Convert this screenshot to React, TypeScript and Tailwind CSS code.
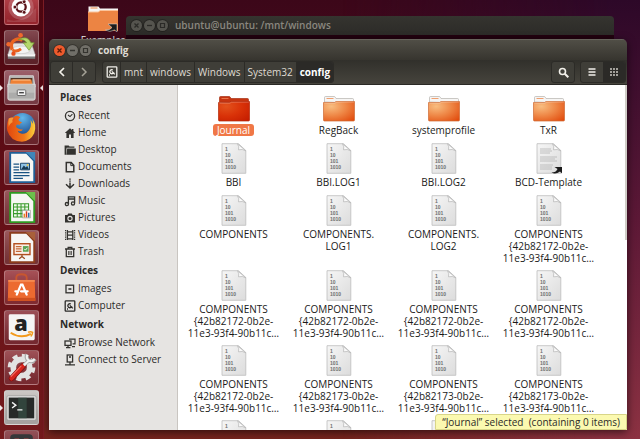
import * as React from "react";

type IconProps = { className?: string };

/* ---------- Sidebar icons ---------- */

function Glyph({ children }: { children: React.ReactNode }) {
  return (
    <svg
      viewBox="0 0 12 12"
      className="size-3 shrink-0"
      fill="none"
      stroke="#33322f"
      strokeWidth="1.3"
      aria-hidden
    >
      {children}
    </svg>
  );
}

const ClockIcon = () => (
  <Glyph>
    <circle cx="6" cy="6" r="4.6" />
    <path d="M4 5l2 1.6L8.4 4.2" strokeWidth="1.1" />
  </Glyph>
);

const HomeIcon = () => (
  <Glyph>
    <path
      d="M6 1.2L.8 6h1.6v5h2.6V7.6h2V11h2.6V6h1.6L9.4 4.1V2H8v.9z"
      fill="#33322f"
      stroke="none"
    />
  </Glyph>
);

const FolderIcon = () => (
  <Glyph>
    <path d="M.6 10.8V1.4h4l1 1.2h4.800v1.200H2.600l-.600 7z" fill="#33322f" stroke="none" />
    <path d="M3.200 4.600h8.600v6.200H2.200z" fill="#33322f" stroke="none" />
  </Glyph>
);

const DocumentIcon = () => (
  <Glyph>
    <path d="M2.3 1.6h4.9l2.6 2.6v6.6H2.3z" strokeWidth="1.5" />
    <path d="M6.8 1.6v3h3" strokeWidth="1" />
  </Glyph>
);

const DownloadIcon = () => (
  <Glyph>
    <path d="M6 4.6v5M2 6.2l4 3.8 4-3.8" strokeWidth="1.5" />
    <path d="M6 .6v1.2M6 2.6v1.2" strokeWidth="1.5" />
  </Glyph>
);

const MusicIcon = () => (
  <Glyph>
    <path d="M4.4 9V1.9h6.2V8M4.4 4h6.2" />
    <circle cx="2.9" cy="9.1" r="1.6" />
    <circle cx="9" cy="8.4" r="1.6" />
  </Glyph>
);

const CameraIcon = () => (
  <Glyph>
    <path
      d="M1 3h2.4l.8-1.4h3.6L8.6 3H11v7.6H1z"
      fill="#33322f"
      stroke="none"
    />
    <circle cx="6" cy="6.5" r="2.1" stroke="#e6e4e2" strokeWidth="1.1" />
  </Glyph>
);

const FilmIcon = () => (
  <Glyph>
    <path d="M3.4 1v10M8.8 1v10M3.4 2.8h5.4M3.4 6.2h5.4M3.4 9.8h5.4" />
    <path d="M1.6 1v10M10.6 1v10" strokeDasharray="1.2 1" strokeWidth="1.2" />
  </Glyph>
);

const TrashIcon = () => (
  <Glyph>
    <path d="M1 3h10M4.2 2.8V1.4h3.6v1.4M2.3 3v7.6h7.4V3" />
    <path d="M4.6 5v4M6 5v4M7.4 5v4" strokeWidth=".8" />
  </Glyph>
);

const ImageDriveIcon = () => (
  <Glyph>
    <rect x="2" y="2.2" width="7.6" height="7.6" />
    <path d="M4.4 5.2h3v1.6h-3z" fill="#33322f" stroke="none" />
  </Glyph>
);

const DiskIcon = ({ className = "size-3 shrink-0" }: IconProps) => (
  <svg
    viewBox="0 0 12 12"
    className={className}
    fill="none"
    stroke="currentColor"
    strokeWidth="1.3"
    aria-hidden
  >
    <rect x="1.2" y=".8" width="9.6" height="10.4" rx=".8" />
    <path d="M7.8 6.2a2 2 0 1 1-1-2.2M5.8 5.4l3 3" />
    <path d="M3 9h1" />
  </svg>
);

const NetworkIcon = () => (
  <Glyph>
    <path d="M5 2.2h6v4.6H8.6M11 9.6H8" strokeWidth="1.2" />
    <rect x="1" y="4" width="6" height="4.4" />
    <path d="M2 10.6h4.4M4 8.4v2" />
  </Glyph>
);

const ServerIcon = () => (
  <Glyph>
    <rect x="3.2" y="1" width="5.4" height="7" />
    <path d="M5 3h2M6 8v2.6M1 10.8h10" />
  </Glyph>
);

/* ---------- File icons ---------- */

function BigFolder({ selected }: { selected?: boolean }) {
  const id = selected ? "folder-on" : "folder-off";
  return (
    <svg viewBox="0 0 34 27" className="h-[27px] w-[34px]" aria-hidden>
      <defs>
        <radialGradient id={id} cx=".25" cy=".25" r="1">
          <stop offset="0" stopColor={selected ? "#e2521c" : "#f8bd80"} />
          <stop offset=".5" stopColor={selected ? "#d93208" : "#ee8544"} />
          <stop offset="1" stopColor={selected ? "#c41c00" : "#e14a0c"} />
        </radialGradient>
      </defs>
      <path
        d="M2.5 7V2.5q0-1 1-1H12q1 0 1.500 1L14 3.500h16.500q1 0 1 1V8z"
        fill={selected ? "#c63410" : "#f6f5f4"}
        stroke={selected ? "#a83014" : "#b5b1ad"}
        strokeWidth=".7"
      />
      <path
        d="M4.500 3.500h7"
        stroke={selected ? "#e8744a" : "#f0a070"}
        strokeWidth="1.2"
      />
      <path
        d="M1.500 7.500h11l1.500-1h18.500V25q0 1-1 1h-29q-1 0-1-1z"
        fill={`url(#${id})`}
        stroke={selected ? "#b22808" : "#cf6a34"}
        strokeWidth=".7"
      />
      <path d="M2.500 8.200h10.500l1.400-1h17.400" fill="none" stroke="#fff" strokeOpacity=".35" strokeWidth=".7" />
    </svg>
  );
}

function Page({ children }: { children: React.ReactNode }) {
  return (
    <svg viewBox="0 0 26 31" className="h-[31px] w-[26px]" aria-hidden>
      <defs>
        <linearGradient id="page" x1="0" y1="0" x2="1" y2="1">
          <stop offset="0" stopColor="#f6f6f6" />
          <stop offset="1" stopColor="#dcdcdc" />
        </linearGradient>
      </defs>
      <path
        d="M1 .7h16.500l7.300 6.800v22.800H1z"
        fill="url(#page)"
        stroke="#bdbdbd"
        strokeWidth=".8"
      />
      <path d="M16.500.8q2 3 1 6 4-1 7.200.9z" fill="#fafafa" stroke="#b4b4b4" strokeWidth=".7" />
      {children}
    </svg>
  );
}

function BinaryFile() {
  return (
    <Page>
      <g fill="#6e6e6e" fontFamily="Liberation Sans, sans-serif" fontSize="5" fontWeight="700">
        <text x="4" y="8">1</text>
        <text x="4" y="14">10</text>
        <text x="4" y="20">101</text>
        <text x="4" y="26">1010</text>
      </g>
    </Page>
  );
}

function LinkedText() {
  return (
    <Page>
      <path
        d="M4 6h11M4 8h12M4 10h10M4 14h17M4 16h15M4 18h17M4 22h13M4 24h12M4 26h12"
        stroke="#b4b4b4"
        strokeWidth=".8"
      />
      <path d="M18.500 24H26v6.500l-2-2q-4.500 3.500-8.500 1 4.500 0 6-3.500z" fill="#1c1c1c" />
    </Page>
  );
}

/* ---------- Launcher icons ---------- */

const DashIcon = () => (
  <svg viewBox="0 0 35 35" className="size-full" aria-hidden>
    <circle cx="17" cy="17" r="13.500" fill="#fff" opacity=".18" />
    <path d="M2 30q14 6 31-12v15H2z" fill="#fff" opacity=".12" />
    <circle cx="17" cy="17" r="10" fill="#fff" />
    <circle cx="17" cy="17" r="5" fill="none" stroke="#5a1218" strokeWidth="2.4" />
    <g fill="#5a1218" stroke="#fff" strokeWidth=".8">
      <circle cx="10.500" cy="17" r="2" />
      <circle cx="20.300" cy="11.400" r="2" />
      <circle cx="20.300" cy="22.600" r="2" />
    </g>
  </svg>
);

const InstallIcon = () => (
  <svg viewBox="0 0 35 35" className="size-full" aria-hidden>
    <path d="M7 13h21l4 12H3z" fill="#e2e2e2" stroke="#9d9d9d" strokeWidth=".6" />
    <path d="M3 25h29v4.500H3z" fill="#7c7c7c" />
    <path d="M3 24.500h29V27H3z" fill="#f6f6f6" />
    <ellipse cx="17" cy="20" rx="10" ry="4" fill="#f3f3f3" stroke="#bbb" strokeWidth=".5" />
    <path d="M7.500 20q-3-8 4-11 4-1.500 7 1" fill="none" stroke="#ea6420" strokeWidth="3.600" />
    <path d="M8 20q4 3 9-1" fill="none" stroke="#ea6420" strokeWidth="3" />
    <circle cx="16.500" cy="4.500" r="2.500" fill="#f0682c" />
    <circle cx="3.800" cy="14" r="2.400" fill="#f0682c" />
    <circle cx="9" cy="24" r="2.300" fill="#e8501c" />
    <path d="M14 9q10-5 13.500 3.500H31l-5.500 8-6-8h3.500Q21 8.500 14 9z" fill="#b4d66c" stroke="#6b9a2c" strokeWidth=".7" />
  </svg>
);

const FilesIcon = () => (
  <svg viewBox="0 0 35 35" className="size-full" aria-hidden>
    <path d="M5 5h25l2 12H3z" fill="#b4b4b2" stroke="#e2e2e2" strokeWidth=".8" />
    <path d="M6 7.500h23v8H6z" fill="#4a2b1c" />
    <path d="M6.500 9h21.500l1 5H5.500z" fill="#ef8134" />
    <path d="M8 9.500h19" stroke="#ffd0a0" strokeWidth="1" />
    <path d="M3 14h29v15q0 2-2 2H5q-2 0-2-2z" fill="#bfbfbd" stroke="#e8e8e8" strokeWidth=".8" />
    <path d="M4 23h27v6H4z" fill="#a0a09e" opacity=".6" />
    <rect x="13" y="20" width="9" height="6" rx=".8" fill="#f2f2f2" stroke="#666" strokeWidth="1" />
    <path d="M15 23h5" stroke="#444" strokeWidth="1.500" />
  </svg>
);

const FirefoxIcon = () => (
  <svg viewBox="0 0 35 35" className="size-full" aria-hidden>
    <defs>
      <radialGradient id="globe" cx=".5" cy=".2" r=".8">
        <stop offset="0" stopColor="#63b9ec" />
        <stop offset="1" stopColor="#123a80" />
      </radialGradient>
      <linearGradient id="fox" x1="0" y1="0" x2="1" y2="0">
        <stop offset="0" stopColor="#e2460e" />
        <stop offset=".6" stopColor="#f0781a" />
        <stop offset="1" stopColor="#fbd13c" />
      </linearGradient>
    </defs>
    <circle cx="18.500" cy="15.500" r="13.500" fill="url(#globe)" />
    <path
      d="M4 8q-3 6-1.500 13Q6 32.500 18 32.500q9-.5 13-9 3-9-2-15 1 3 .3 5-1-3-2.300-4 1.500 6-1 10-3 5-8 4.500-4-.5-4.500-3 3 1.500 5.500-1.500-3 .3-5.500-1.300-3-1.700-1-3.700 2-.5 3.200.3 0-2 2.500-3-3-.3-4-2.300.5-2 2-3Q11 3.500 9 7 6.500 6.500 4 8z"
      fill="url(#fox)"
    />
    <path d="M4 8q3-1.500 5-.8Q7 10 8 12q-3 1-4 5-1-4 0-9z" fill="#f39a3c" />
  </svg>
);

function OfficeDoc({ color, dark, children }: { color: string; dark: string; children: React.ReactNode }) {
  return (
    <svg viewBox="0 0 35 35" className="size-full" aria-hidden>
      <path d="M5.500 2h17.500l8 8.500v22.500H5.500z" fill="#f7f7f5" stroke={color} strokeWidth="2" />
      <path d="M22 1h10v10z" fill={dark} />
      {children}
    </svg>
  );
}

const WriterIcon = () => (
  <OfficeDoc color="#1f5f96" dark="#3f86b8">
    <path d="M9 14h6M9 17h6M9 20h6M9 23h17M9 26h17M9 29h10" stroke="#1b5482" strokeWidth="1.300" />
    <path d="M16.500 13h9.500v7h-9.500z" fill="#8fc3e6" stroke="#1b4263" strokeWidth="1" />
    <path d="M17 19.500l3-4 2 2 1.500-1.500 2 3.500z" fill="#183a52" />
    <circle cx="24" cy="14.800" r="1" fill="#f5c840" />
  </OfficeDoc>
);

const CalcIcon = () => (
  <OfficeDoc color="#2f9a22" dark="#6cbf4c">
    <path d="M9 13.500h16v14H9z" fill="#eef8ea" />
    <path d="M9 13.500h16v14H9zM9 17h16M9 20.500h16M9 24h16M13 13.500v14M17 13.500v14M21 13.500v14" fill="none" stroke="#3a9a2c" strokeWidth="1.100" />
    <path d="M18.500 20.500h8.500v8h-8.500z" fill="#fff" stroke="#888" strokeWidth=".6" />
    <path d="M20.500 28v-4" stroke="#e08a1c" strokeWidth="1.600" />
    <path d="M22.800 28v-6.500" stroke="#d83a20" strokeWidth="1.600" />
    <path d="M25.200 28v-5" stroke="#2f6fb0" strokeWidth="1.600" />
  </OfficeDoc>
);

const ImpressIcon = () => (
  <OfficeDoc color="#8c3d1c" dark="#a8603a">
    <rect x="9.500" y="13.500" width="17" height="11.500" fill="#fbeee6" stroke="#b3501f" strokeWidth="1.500" />
    <path d="M11.500 16.500h6M11.500 19h6M11.500 21.500h6" stroke="#c46a38" strokeWidth="1.300" />
    <rect x="19" y="16" width="6" height="6" fill="#5aa352" />
    <path d="M20.500 19l1.200 1.300 2-2.500" stroke="#fff" fill="none" />
    <path d="M18 25v2M18 27l-3 2.500M18 27l3 2.500" stroke="#9b4a1e" strokeWidth="1.300" />
  </OfficeDoc>
);

const SoftwareIcon = () => (
  <svg viewBox="0 0 35 35" className="size-full" aria-hidden>
    <path d="M12 11V7q0-3.500 5.500-3.500T23 7v4" fill="none" stroke="#c8562f" strokeWidth="2" />
    <path d="M3.500 9.500h28l.7 22H3z" fill="#ec6a30" />
    <path d="M3.500 9.500h28v2h-28z" fill="#f58a52" />
    <path d="M3 28.500h29.200v3H3z" fill="#d0501e" />
    <g stroke="#fff" strokeWidth="2.400" fill="none" strokeLinecap="round">
      <path d="M12.500 25L17 14.500h1.500L23 25M11 21.500h2.500M17 21.500h7" />
    </g>
  </svg>
);

const AmazonIcon = () => (
  <svg viewBox="0 0 35 35" className="size-full" aria-hidden>
    <rect x="4" y="3.500" width="27.500" height="27.500" rx="1.500" fill="#f5f5f4" />
    <text x="17" y="21" textAnchor="middle" fontFamily="Open Sans, sans-serif" fontSize="23" fontWeight="800" fill="#222">
      a
    </text>
    <path d="M6 23q11 7 21.500 1.200" fill="none" stroke="#f39a1c" strokeWidth="2" />
    <path d="M24.500 22.500q3-1 4.800.2-.2 2.800-2 4.300" fill="none" stroke="#f39a1c" strokeWidth="1.500" />
  </svg>
);

const SettingsIcon = () => (
  <svg viewBox="0 0 35 35" className="size-full" aria-hidden>
    <circle cx="17.500" cy="17.500" r="12.700" fill="none" stroke="#e2e2e2" strokeWidth="4" strokeDasharray="5.400 4.570" />
    <circle cx="17.500" cy="17.500" r="8.700" fill="none" stroke="#e2e2e2" strokeWidth="6" />
    <path d="M7 29L20 15" stroke="#7c0f10" strokeWidth="6" strokeLinecap="round" />
    <path d="M7 29L19 16" stroke="#d6251e" strokeWidth="4.600" strokeLinecap="round" />
    <path d="M6.500 27L17 16" stroke="#f07066" strokeWidth="1.200" strokeLinecap="round" />
    <path d="M20 15l5-4.500M23.500 3.500q-2 4 1.500 6.500 4 2.500 7-1.500" fill="none" stroke="#a9a9a9" strokeWidth="4" />
    <path d="M20 15l5-4.500M23.700 4q-1.700 4 1.500 6 3.500 2 6.300-1.500" fill="none" stroke="#f0f0f0" strokeWidth="2.200" />
  </svg>
);

const TerminalIcon = () => (
  <svg viewBox="0 0 35 35" className="size-full" aria-hidden>
    <rect x="2" y="5" width="31" height="26" rx="1.500" fill="#dededc" stroke="#8e8e8c" strokeWidth=".6" />
    <rect x="4" y="7" width="27" height="22" fill="#272a28" />
    <path d="M14 7h9v22h-9z" fill="#3c5a4c" opacity=".55" />
    <path d="M7.500 12l4 3-4 3M13 20h5.500" fill="none" stroke="#f3f3f3" strokeWidth="1.500" />
  </svg>
);

const WorkspaceIcon = () => (
  <svg viewBox="0 0 35 35" className="size-full" aria-hidden>
    <rect x="5.500" y="3.500" width="24" height="24" rx="4" fill="#36383a" />
    <path d="M10 8h5v5h-5zM20 8h5v5h-5z" fill="#b34a4a" />
  </svg>
);

const LAUNCHER = [
  { label: "Search your computer", icon: DashIcon, tile: "bg-[#b02c35]" },
  { label: "Install Ubuntu", icon: InstallIcon, tile: "bg-[#6c2830]" },
  { label: "Files", icon: FilesIcon, tile: "bg-[#8b4450]", active: true, running: true },
  { label: "Firefox", icon: FirefoxIcon, tile: "bg-[#7a2a33]" },
  { label: "LibreOffice Writer", icon: WriterIcon, tile: "bg-[#85303a]" },
  { label: "LibreOffice Calc", icon: CalcIcon, tile: "bg-[#873a40]" },
  { label: "LibreOffice Impress", icon: ImpressIcon, tile: "bg-[#8a3b40]" },
  { label: "Ubuntu Software Center", icon: SoftwareIcon, tile: "bg-[#96333a]" },
  { label: "Amazon", icon: AmazonIcon, tile: "bg-[#8a3038]" },
  { label: "System Settings", icon: SettingsIcon, tile: "bg-[#8d3339]" },
  { label: "Terminal", icon: TerminalIcon, tile: "bg-[#c3bebb]", running: true },
  { label: "Workspace Switcher", icon: WorkspaceIcon, tile: "bg-[#80333a]" },
];

const SIDEBAR = [
  {
    title: "Places",
    items: [
      { label: "Recent", icon: ClockIcon },
      { label: "Home", icon: HomeIcon },
      { label: "Desktop", icon: FolderIcon },
      { label: "Documents", icon: DocumentIcon },
      { label: "Downloads", icon: DownloadIcon },
      { label: "Music", icon: MusicIcon },
      { label: "Pictures", icon: CameraIcon },
      { label: "Videos", icon: FilmIcon },
      { label: "Trash", icon: TrashIcon },
    ],
  },
  {
    title: "Devices",
    items: [
      { label: "Images", icon: ImageDriveIcon },
      { label: "Computer", icon: DiskIcon },
    ],
  },
  {
    title: "Network",
    items: [
      { label: "Browse Network", icon: NetworkIcon },
      { label: "Connect to Server", icon: ServerIcon },
    ],
  },
];

interface FileDef {
  kind: "folder" | "binary" | "link";
  lines: string[];
}

const guid = (prefix: string): FileDef => ({
  kind: "binary",
  lines: ["COMPONENTS", `{${prefix}-0b2e-`, "11e3-93f4-90b11c…"],
});

const FILES: FileDef[] = [
  { kind: "folder", lines: ["Journal"] },
  { kind: "folder", lines: ["RegBack"] },
  { kind: "folder", lines: ["systemprofile"] },
  { kind: "folder", lines: ["TxR"] },
  { kind: "binary", lines: ["BBI"] },
  { kind: "binary", lines: ["BBI.LOG1"] },
  { kind: "binary", lines: ["BBI.LOG2"] },
  { kind: "link", lines: ["BCD-Template"] },
  { kind: "binary", lines: ["COMPONENTS"] },
  { kind: "binary", lines: ["COMPONENTS.", "LOG1"] },
  { kind: "binary", lines: ["COMPONENTS.", "LOG2"] },
  guid("42b82172"),
  guid("42b82172"),
  guid("42b82172"),
  guid("42b82172"),
  guid("42b82172"),
  guid("42b82172"),
  guid("42b82173"),
  guid("42b82173"),
  guid("42b82173"),
  guid("42b82173"),
  guid("42b82173"),
  guid("42b82173"),
  guid("42b82173"),
];

const CRUMBS = ["mnt", "windows", "Windows", "System32", "config"];

function WindowButtons({ focused }: { focused?: boolean }) {
  const dim = focused ? "bg-[#716f68] text-[#35342f]" : "bg-[#55544e] text-[#2b2a27]";
  const close = focused ? "bg-[#ee5a2c] text-[#5c1a08]" : dim;
  const base = "flex size-[11px] items-center justify-center rounded-full ring-1 ring-black/25";
  return (
    <div className="flex gap-[2px]">
      <button type="button" aria-label="Close" className={`${base} ${close}`}>
        <svg viewBox="0 0 11 11" className="size-[11px]" stroke="currentColor" strokeWidth="1.300">
          <path d="M3.500 3.500l4 4M7.500 3.500l-4 4" />
        </svg>
      </button>
      <button type="button" aria-label="Minimize" className={`${base} ${dim}`}>
        <svg viewBox="0 0 11 11" className="size-[11px]" stroke="currentColor" strokeWidth="1.300">
          <path d="M3 5.500h5" />
        </svg>
      </button>
      <button type="button" aria-label="Maximize" className={`${base} ${dim}`}>
        <svg viewBox="0 0 11 11" className="size-[11px]" fill="none" stroke="currentColor" strokeWidth="1.200">
          <path d="M3.500 3.500h4v4h-4z" />
        </svg>
      </button>
    </div>
  );
}

function Launcher() {
  return (
    <nav
      aria-label="Launcher"
      className="relative flex w-11 shrink-0 flex-col overflow-hidden border-r border-[#7c1c24] bg-linear-to-b from-[#4c0610] via-[#650f17] to-[#741a1c]"
    >
      <div className="-mt-2.5 flex flex-col gap-[5px]">
        {LAUNCHER.map((app) => {
          const Icon = app.icon;
          return (
            <div key={app.label} className="flex items-center">
              <span className="flex w-1 justify-start">
                {app.running && (
                  <svg viewBox="0 0 3 6" className="h-1.5 w-[3px]" fill="#f0e8e8">
                    <path d="M0 0l3 3-3 3z" />
                  </svg>
                )}
              </span>
              <button
                type="button"
                aria-label={app.label}
                className={`size-[35px] rounded-[3px] border border-white/25 bg-linear-to-b from-white/15 to-black/15 ${app.tile}`}
              >
                <Icon />
              </button>
              {app.active && (
                <svg viewBox="0 0 3 6" className="ml-px h-1.5 w-[3px]" fill="#f0e8e8">
                  <path d="M3 0L0 3l3 3z" />
                </svg>
              )}
            </div>
          );
        })}
      </div>
    </nav>
  );
}

function Toolbar() {
  const group = "flex overflow-hidden rounded-[3px] border border-[#2c2b27] bg-[#3f3e38]";
  const button = "flex h-5 w-[22px] items-center justify-center";
  return (
    <div className="flex h-[25px] items-center border-b border-[#2a2925] bg-linear-to-b from-[#31302b] to-[#46443d] px-px text-[#dfdbd2]">
      <div className={group}>
        <button type="button" aria-label="Back" className={`${button} border-r border-[#2c2b27]`}>
          <svg viewBox="0 0 8 10" className="h-2.5 w-2" fill="none" stroke="#f2f0ea" strokeWidth="1.700">
            <path d="M6 1L2 5l4 4" />
          </svg>
        </button>
        <button type="button" aria-label="Forward" className={button}>
          <svg viewBox="0 0 8 10" className="h-2.5 w-2" fill="none" stroke="#a5a297" strokeWidth="1.500">
            <path d="M2 1l4 4-4 4" />
          </svg>
        </button>
      </div>

      {/* Path bar */}
      <div className={`${group} ml-1.5`}>
        <button type="button" aria-label="Root" className="flex h-5 w-[18px] items-center justify-center border-r border-[#2c2b27] text-[#f2f0ea]">
          <DiskIcon />
        </button>
        {CRUMBS.map((c, i) => (
          <button
            key={c}
            type="button"
            className={
              i === CRUMBS.length - 1
                ? "h-5 bg-[#2b2a27] px-[3px] font-bold text-white"
                : "h-5 border-r border-[#2c2b27] px-[3px]"
            }
          >
            {c}
          </button>
        ))}
      </div>

      <div className="ml-auto flex gap-[5px]">
        <div className={group}>
          <button type="button" aria-label="Search" className={button}>
            <svg viewBox="0 0 11 11" className="size-[11px]" fill="none" stroke="#f2f0ea" strokeWidth="1.600">
              <circle cx="4.500" cy="4.500" r="3" />
              <path d="M6.800 6.800l3.500 3.500" strokeWidth="2" />
            </svg>
          </button>
        </div>
        <div className={group}>
          <button type="button" aria-label="List view" className={button}>
            <svg viewBox="0 0 8 8" className="size-2" stroke="#f2f0ea" strokeWidth="1.400">
              <path d="M.5 1h7M.5 4h7M.5 7h7" />
            </svg>
          </button>
          <button type="button" aria-label="Icon view" className={`${button} bg-[#2b2a27]`}>
            <svg viewBox="0 0 8 8" className="size-2" stroke="#f2f0ea" strokeWidth="1.600" strokeDasharray="1.600 1.400">
              <path d="M.2 1h8M.2 4h8M.2 7h8" />
            </svg>
          </button>
        </div>
      </div>
    </div>
  );
}

function Sidebar() {
  return (
    <aside className="w-[129px] shrink-0 border-r border-[#c9c5c1] bg-[#e6e4e2] pt-[2px] text-[#2b2a28]">
      {SIDEBAR.map((group) => (
        <section key={group.title}>
          <h2 className="h-5 pl-[11px] font-bold leading-5">{group.title}</h2>
          <ul>
            {group.items.map((item) => {
              const Icon = item.icon;
              return (
                <li key={item.label}>
                  <a href="#" className="flex h-[17px] items-center gap-[2px] pl-[15px]">
                    <Icon />
                    {item.label}
                  </a>
                </li>
              );
            })}
          </ul>
        </section>
      ))}
    </aside>
  );
}

function FileGrid() {
  const [selected, setSelected] = React.useState(0);
  return (
    <div className="relative min-w-0 flex-1 overflow-hidden bg-white">
      <div className="grid auto-rows-[75px] grid-cols-4 grid-rows-[52px_52px] pl-[3px] pr-[26px] pt-1.5">
        {FILES.map((file, i) => (
          <button
            key={i}
            type="button"
            onClick={() => setSelected(i)}
            className="flex flex-col items-center gap-[2px] text-[#1a1a19]"
          >
            <span className="flex h-[31px] items-end">
              {file.kind === "folder" && <BigFolder selected={selected === i} />}
              {file.kind === "binary" && <BinaryFile />}
              {file.kind === "link" && <LinkedText />}
            </span>
            <span
              className={
                selected === i
                  ? "rounded-[3px] bg-[#f07746] px-1 leading-3 text-white"
                  : "leading-3"
              }
            >
              {file.lines.map((line) => (
                <span key={line} className="block whitespace-nowrap">{line}</span>
              ))}
            </span>
          </button>
        ))}
      </div>

      {/* Overlay scrollbar */}
      <div className="absolute right-0 top-0 h-[155px] w-[2px] bg-[#cfccc6]" />

      <output className="absolute bottom-0 right-0 rounded-tl-[3px] border border-[#d8d588] bg-[#fbf9b0] px-1.5 leading-[14px] whitespace-pre text-[#2b2a28]">
        {"“Journal” selected  (containing 0 items)"}
      </output>
    </div>
  );
}

export default function App() {
  return (
    <div className="flex h-screen overflow-hidden bg-[#3b0618] font-['Open_Sans',sans-serif] text-[10px]">
      <Launcher />
      <main className="relative flex-1 bg-linear-to-b from-[#3c0719] via-[#571321] to-[#75241d]">
        <div className="absolute inset-y-0 right-0 w-1/2 bg-linear-to-b from-[#2d0828] via-[#5c1836] to-[#8c3242] [mask-image:linear-gradient(to_left,black_10%,transparent)]" />

        <a href="#" className="absolute left-[30px] top-1 flex w-[58px] flex-col items-center gap-[2px] text-white">
          <svg viewBox="0 0 34 28" className="h-7 w-[34px]" aria-hidden>
            <path d="M2.500 8V2.500h10l1.500 2h18V9z" fill="#f6f5f4" />
            <path d="M4.500 4h7" stroke="#ee8544" />
            <path d="M2 8h10.500l1.500-1.500h18V27H2z" fill="#ec8443" />
            <path d="M2 8h10.500l1.500-1.500h18" fill="none" stroke="#fac39a" />
            <path d="M22 20h9v8l-2.500-2q-5 3-9 0 5 0 6.500-2.500z" fill="#1c1c1c" stroke="#ddd" strokeWidth=".5" />
          </svg>
          <span className="leading-3">Examples</span>
        </a>

        <section className="absolute left-[82px] right-[26px] top-4 h-40">
          <header className="flex h-[19px] items-center gap-[7px] rounded-t-[4px] bg-linear-to-b from-[#35342f] to-[#2c2b28] pl-[5px] text-[#8a877f]">
            <WindowButtons />
            <h1 className="font-semibold">ubuntu@ubuntu: /mnt/windows</h1>
          </header>
          <div className="h-full bg-[#22020f]" />
        </section>

        <section className="absolute bottom-[9px] left-[5px] right-[13px] top-[39px] flex flex-col overflow-hidden rounded-t-[5px] shadow-[0_2px_8px_rgba(0,0,0,0.6)]">
          <header className="flex h-[21px] shrink-0 items-center gap-[7px] border-t border-[#66645b] bg-linear-to-b from-[#504e46] to-[#37352f] pl-[5px] text-[#dfdbd2]">
            <WindowButtons focused />
            <h1 className="font-bold">config</h1>
          </header>
          <Toolbar />
          <div className="flex min-h-0 flex-1">
            <Sidebar />
            <FileGrid />
          </div>
        </section>
      </main>
    </div>
  );
}
